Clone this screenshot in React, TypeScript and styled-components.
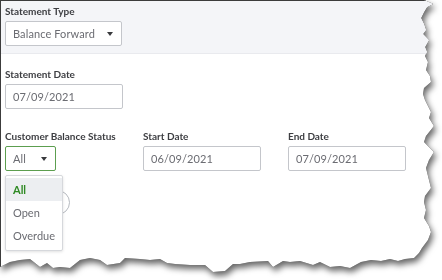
import styled, { createGlobalStyle } from "styled-components"

const GlobalStyle = createGlobalStyle`
  html, body {
    margin: 0;
    padding: 0;
    background: #ffffff;
  }
  #root {
    width: 442px;
    height: 280px;
    overflow: hidden;
  }
`

const torn = [
  [424, 0], [433, 4], [427, 7], [424, 12], [421, 18], [424, 24], [426, 30], [423, 34],
  [429, 40], [425, 47], [427, 52], [425, 56], [428, 62], [426, 70], [430, 76], [431, 82],
  [424, 88], [423, 94], [425, 100], [428, 106], [431, 112], [429, 118], [434, 126], [430, 131],
  [426, 136], [424, 142], [430, 148], [434, 152], [429, 160], [426, 168], [428, 176], [431, 188],
  [425, 196], [424, 202], [426, 210], [424, 218], [429, 226], [431, 232], [428, 240], [422, 248],
  [419, 253], [414, 258], [405, 259], [398, 261], [390, 259], [381, 261], [371, 260], [361, 262],
  [350, 268], [340, 266], [330, 267], [320, 262], [313, 265], [300, 261], [290, 262], [283, 261],
  [273, 267], [268, 261], [250, 262], [240, 264], [233, 264], [225, 271], [213, 272], [205, 265],
  [190, 265], [175, 264], [167, 263], [160, 259], [150, 260], [140, 259], [125, 258], [120, 263],
  [107, 265], [100, 260], [90, 258], [80, 260], [70, 268], [60, 267], [53, 268], [47, 263],
  [40, 267], [30, 259], [20, 260], [10, 262], [0, 267],
]
  .map(([x, y]) => `${x}px ${y}px`)
  .join(", ")

const Frame = styled.div`
  width: 442px;
  height: 280px;
  filter: drop-shadow(0 0 0.6px #1e1e1e) drop-shadow(2px 4px 3px rgba(0, 0, 0, 0.6));
`

const Sheet = styled.div`
  width: 442px;
  height: 280px;
  box-sizing: border-box;
  background: #ffffff;
  border-left: 1px solid #3c3c3c;
  border-top: 1px solid #3c3c3c;
  clip-path: polygon(0 0, ${torn});
  font-family: Lato, "Liberation Sans", sans-serif;
  color: #393a3d;
`

const TopBand = styled.section`
  height: 53px;
  box-sizing: border-box;
  padding: 3px 0 0 4px;
  background: #f4f5f8;
  border-bottom: 1px solid #e9eaee;
`

const Body = styled.section`
  padding: 13px 0 0 4px;
`

const Field = styled.div`
  display: flex;
  flex-direction: column;
  position: relative;
`

const Label = styled.label`
  font-size: 10px;
  font-weight: 700;
  line-height: 14px;
  height: 14px;
  margin-bottom: 3px;
  color: #3d3e42;
  white-space: nowrap;
`

const Box = styled.div<{ $width: number; $active?: boolean }>`
  width: ${(p) => p.$width}px;
  height: 25px;
  box-sizing: border-box;
  display: flex;
  align-items: center;
  justify-content: space-between;
  padding: 0 8px 0 7px;
  background: #ffffff;
  border: 1px solid ${(p) => (p.$active ? "#5c9e4f" : "#c4c6cb")};
  border-radius: 2px;
  font-size: 11px;
  letter-spacing: 0.1px;
  color: #6b6c72;
`

const Caret = styled.span`
  width: 0;
  height: 0;
  border-left: 3.5px solid transparent;
  border-right: 3.5px solid transparent;
  border-top: 4px solid #393a3d;
`

const Spacer = styled.div`
  height: 20px;
`

const Row = styled.div`
  display: grid;
  grid-template-columns: 138px 145px 117px;
`

const Pill = styled.div`
  width: 65px;
  height: 25px;
  margin-top: 19px;
  box-sizing: border-box;
  border: 1px solid #b5b9bf;
  border-radius: 13px;
  background: #ffffff;
`

const Menu = styled.ul`
  position: absolute;
  top: 46px;
  left: 0;
  width: 58px;
  margin: 0;
  padding: 2px 0 3px;
  list-style: none;
  box-sizing: border-box;
  background: #ffffff;
  border: 1px solid #d6d8dc;
  border-radius: 2px;
  box-shadow: 0 1px 3px rgba(0, 0, 0, 0.12);
  z-index: 2;
`

const Item = styled.li<{ $selected?: boolean }>`
  height: 23px;
  line-height: 23px;
  padding-left: 7px;
  font-size: 11px;
  font-weight: ${(p) => (p.$selected ? 700 : 400)};
  color: ${(p) => (p.$selected ? "#2f8a24" : "#6b6c72")};
  background: ${(p) => (p.$selected ? "#eceef1" : "transparent")};
`

export default function App() {
  return (
    <>
      <GlobalStyle />
      <Frame>
        <Sheet>
          <TopBand>
            <Field>
              <Label>Statement Type</Label>
              <Box $width={117}>
                Balance Forward
                <Caret />
              </Box>
            </Field>
          </TopBand>
          <Body>
            <Field>
              <Label>Statement Date</Label>
              <Box $width={118}>07/09/2021</Box>
            </Field>
            <Spacer />
            <Row>
              <Field>
                <Label>Customer Balance Status</Label>
                <Box $width={51} $active>
                  All
                  <Caret />
                </Box>
                <Pill />
                <Menu>
                  <Item $selected>All</Item>
                  <Item>Open</Item>
                  <Item>Overdue</Item>
                </Menu>
              </Field>
              <Field>
                <Label>Start Date</Label>
                <Box $width={118}>06/09/2021</Box>
              </Field>
              <Field>
                <Label>End Date</Label>
                <Box $width={118}>07/09/2021</Box>
              </Field>
            </Row>
          </Body>
        </Sheet>
      </Frame>
    </>
  )
}
